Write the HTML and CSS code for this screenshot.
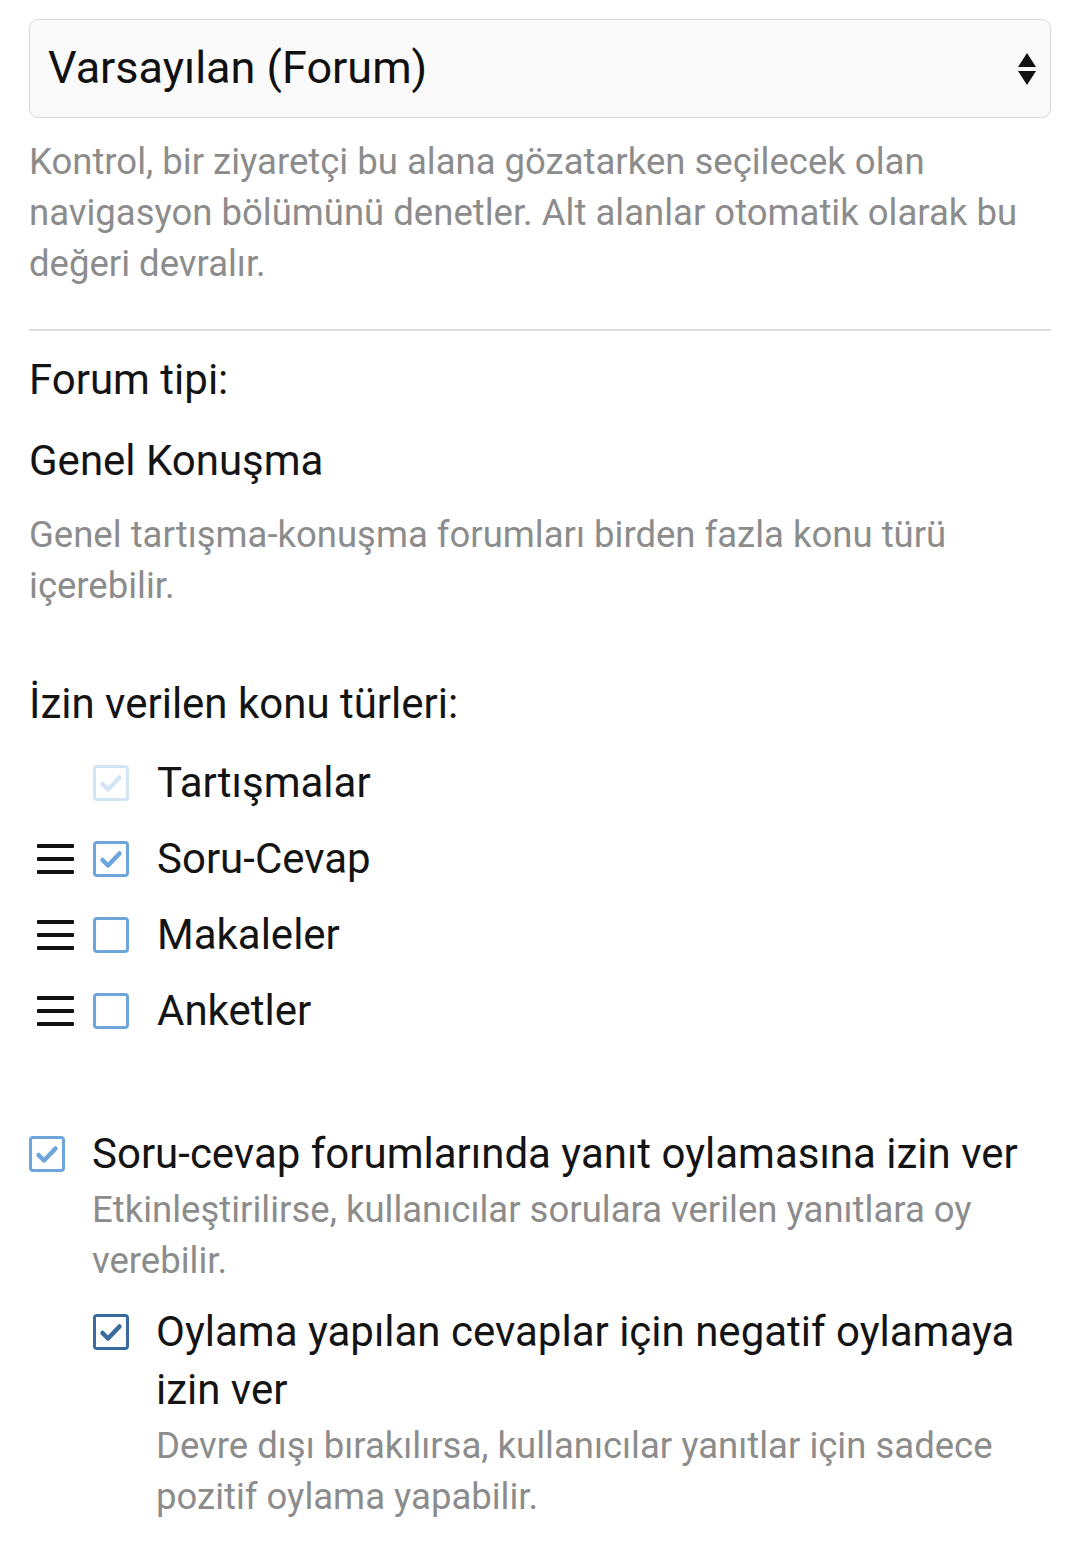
FILE: index.html
```html
<!DOCTYPE html>
<html lang="tr">
<head>
    <meta charset="UTF-8">
    <meta name="viewport" content="width=device-width, initial-scale=1.0">
    <title>Forum ayarları</title>
    <link rel="stylesheet" href="styles.css">
</head>
<body>
    <div class="page">
        <div class="select">
            <span>Varsayılan (Forum)</span>
            <svg class="select-arrows" width="20" height="34" viewBox="0 0 20 34">
                <path d="M10 1 L19 15 L1 15 Z" fill="#111"/>
                <path d="M1 19 L19 19 L10 33 Z" fill="#111"/>
            </svg>
        </div>
        <p class="hint">Kontrol, bir ziyaretçi bu alana gözatarken seçilecek olan navigasyon bölümünü denetler. Alt alanlar otomatik olarak bu değeri devralır.</p>

        <hr class="divider">

        <div class="label">Forum tipi:</div>
        <div class="value">Genel Konuşma</div>
        <p class="hint">Genel tartışma-konuşma forumları birden fazla konu türü içerebilir.</p>

        <div class="label types-label">İzin verilen konu türleri:</div>
        <ul class="types">
            <li>
                <span class="handle empty"></span>
                <span class="box checked disabled">
                    <svg viewBox="0 0 36 36"><path d="M9.5 19 L15 24.5 L26.5 12.5" fill="none" stroke="currentColor" stroke-width="4.5" stroke-linecap="round" stroke-linejoin="round"/></svg>
                </span>
                <span class="type-name">Tartışmalar</span>
            </li>
            <li>
                <span class="handle"><i></i><i></i><i></i></span>
                <span class="box checked">
                    <svg viewBox="0 0 36 36"><path d="M9.5 19 L15 24.5 L26.5 12.5" fill="none" stroke="currentColor" stroke-width="4.5" stroke-linecap="round" stroke-linejoin="round"/></svg>
                </span>
                <span class="type-name">Soru-Cevap</span>
            </li>
            <li>
                <span class="handle"><i></i><i></i><i></i></span>
                <span class="box"></span>
                <span class="type-name">Makaleler</span>
            </li>
            <li>
                <span class="handle"><i></i><i></i><i></i></span>
                <span class="box"></span>
                <span class="type-name">Anketler</span>
            </li>
        </ul>

        <div class="option">
            <span class="box checked">
                <svg viewBox="0 0 36 36"><path d="M9.5 19 L15 24.5 L26.5 12.5" fill="none" stroke="currentColor" stroke-width="4.5" stroke-linecap="round" stroke-linejoin="round"/></svg>
            </span>
            <div class="option-body">
                <div class="option-title">Soru-cevap forumlarında yanıt oylamasına izin ver</div>
                <p class="option-hint">Etkinleştirilirse, kullanıcılar sorulara verilen yanıtlara oy verebilir.</p>

                <div class="option sub-option">
                    <span class="box checked dark">
                        <svg viewBox="0 0 36 36"><path d="M9.5 19 L15 24.5 L26.5 12.5" fill="none" stroke="currentColor" stroke-width="4.5" stroke-linecap="round" stroke-linejoin="round"/></svg>
                    </span>
                    <div class="option-body">
                        <div class="option-title">Oylama yapılan cevaplar için negatif oylamaya izin ver</div>
                        <p class="option-hint">Devre dışı bırakılırsa, kullanıcılar yanıtlar için sadece pozitif oylama yapabilir.</p>
                    </div>
                </div>
            </div>
        </div>
    </div>
</body>
</html>
```

FILE: styles.css
```css
body {
    margin: 0;
    padding: 0;
    background-color: #fff;
    font-family: Roboto, "Noto Sans", sans-serif;
    color: #141414;
}
.page {
    padding: 19px 29px 0 29px;
}
.select {
    height: 97px;
    border: 1px solid #d8d8d8;
    border-radius: 9px;
    background-color: #fafafa;
    display: flex;
    align-items: center;
    justify-content: space-between;
    padding: 0 13px 0 18px;
    font-size: 45px;
    color: #111;
}
.select span {
    margin-top: -2px;
}
.select-arrows {
    display: block;
}
.hint {
    margin: 0;
    font-size: 36.5px;
    line-height: 51px;
    color: #8c8c8c;
}
.select + .hint {
    margin-top: 18px;
}
.divider {
    border: none;
    border-top: 2px solid #dcdcdc;
    margin: 40px 0 0 0;
}
.label {
    font-size: 42px;
    line-height: 52px;
    margin-top: 23px;
}
.value {
    font-size: 42px;
    line-height: 52px;
    margin-top: 29px;
    margin-bottom: 22px;
}
.types-label {
    margin-top: 67px;
}
.types {
    list-style: none;
    margin: 15px 0 0 0;
    padding: 0;
}
.types li {
    display: flex;
    align-items: center;
    height: 76px;
}
.handle {
    width: 37px;
    margin-left: 8px;
    margin-right: 19px;
    display: flex;
    flex-direction: column;
    gap: 9px;
}
.handle i {
    display: block;
    height: 4px;
    background-color: #111;
    border-radius: 1px;
}
.box {
    width: 36px;
    height: 36px;
    box-sizing: border-box;
    border: 3px solid #6ea6dc;
    border-radius: 4px;
    color: #6ea6dc;
    background-color: #fff;
    flex-shrink: 0;
    position: relative;
}
.box svg {
    position: absolute;
    top: -3px;
    left: -3px;
    width: 36px;
    height: 36px;
}
.box.disabled {
    border-color: #d3e5f5;
    color: #d3e5f5;
}
.box.dark {
    border-color: #3a6a9e;
    color: #3a6a9e;
}
.type-name {
    font-size: 42px;
    margin-left: 28px;
    margin-top: -2px;
}
.option {
    display: flex;
    align-items: flex-start;
    margin-top: 76px;
}
.option > .box {
    margin-top: 11px;
}
.option-body {
    margin-left: 27px;
}
.option-title {
    font-size: 42px;
    line-height: 58px;
}
.option-hint {
    margin: 1px 0 0 0;
    font-size: 36.5px;
    line-height: 51px;
    color: #8c8c8c;
}
.sub-option {
    margin-top: 17px;
    margin-left: 1px;
}
```
